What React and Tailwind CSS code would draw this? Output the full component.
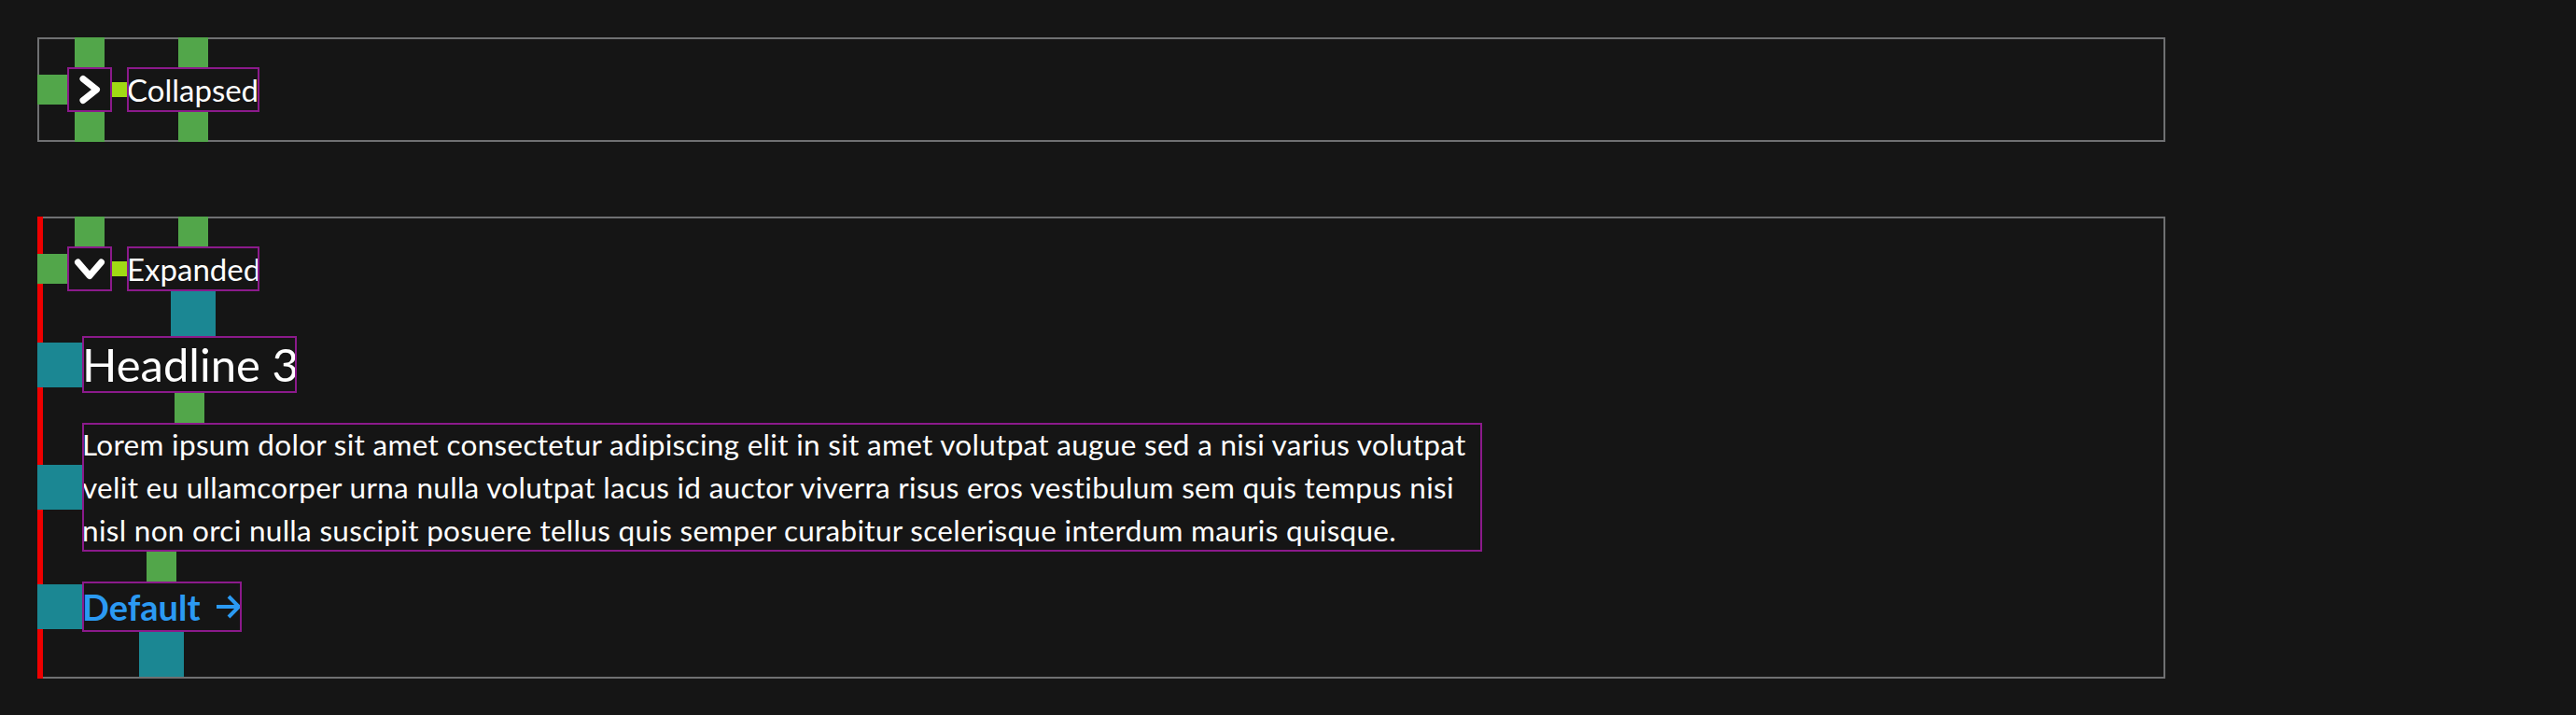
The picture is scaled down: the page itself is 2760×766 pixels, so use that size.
const font = { fontFamily: 'Lato, "Open Sans", sans-serif' };

function Chevron({ open }) {
  return (
    <svg width="48" height="48" viewBox="0 0 48 48" fill="none">
      <polyline
        points={open ? '11.5,17 24,31.5 36.5,17' : '17,12.5 31.5,24 17,35.5'}
        stroke="#ffffff"
        strokeWidth="7"
        strokeLinecap="round"
        strokeLinejoin="round"
      />
    </svg>
  );
}

function ArrowRight() {
  return (
    <svg width="28" height="28" viewBox="0 0 28 28" fill="none" stroke="#2b9af3" strokeWidth="4">
      <line x1="1" y1="14" x2="25" y2="14" />
      <polyline points="14,3 25,14 14,25" />
    </svg>
  );
}

function Header({ open, label }) {
  return (
    <div className="grid w-fit grid-cols-[32px_48px_16px_auto] grid-rows-[32px_48px_auto]">
      <div className="col-start-2 row-start-1 h-8 w-8 justify-self-center bg-[#52a64a]" />
      <div className="col-start-4 row-start-1 h-8 w-8 justify-self-center bg-[#52a64a]" />

      <div className="col-start-1 row-start-2 h-8 w-8 self-center bg-[#52a64a]" />
      <button className="col-start-2 row-start-2 flex h-12 w-12 items-center justify-center outline-2 -outline-offset-2 outline-[#8b1a8b]">
        <Chevron open={open} />
      </button>
      <div className="col-start-3 row-start-2 h-4 w-4 self-center bg-[#a0da14]" />
      <div className="col-start-4 row-start-2 h-12 w-[142px] text-[33px] leading-[48px] text-white outline-2 -outline-offset-2 outline-[#8b1a8b]">
        {label}
      </div>

      {open ? (
        <div className="col-start-4 row-start-3 h-12 w-12 justify-self-center bg-[#1b8793]" />
      ) : (
        <>
          <div className="col-start-2 row-start-3 h-8 w-8 justify-self-center bg-[#52a64a]" />
          <div className="col-start-4 row-start-3 h-8 w-8 justify-self-center bg-[#52a64a]" />
        </>
      )}
    </div>
  );
}

function Item({ before, after, children }) {
  return (
    <div className="grid w-fit grid-cols-[48px_auto]">
      {before ? <div className={`col-start-2 row-start-1 justify-self-center ${before}`} /> : null}
      <div className="col-start-1 row-start-2 h-12 w-12 self-center bg-[#1b8793]" />
      <div className="col-start-2 row-start-2">{children}</div>
      {after ? <div className={`col-start-2 row-start-3 justify-self-center ${after}`} /> : null}
    </div>
  );
}

export default function App() {
  return (
    <div className="min-h-screen bg-[#151515] p-10" style={font}>
      <section className="w-[2280px] shadow-[inset_0_0_0_2px_#6f7072]">
        <Header label="Collapsed" />
      </section>

      <section className="mt-20 w-[2280px] pb-[2px] shadow-[inset_6px_0_0_#ee0000,inset_0_0_0_2px_#6f7072]">
        <Header open label="Expanded" />

        <Item after="h-8 w-8 bg-[#52a64a]">
          <h3 className="w-[230px] text-[49px] leading-[61px] font-normal whitespace-nowrap text-white outline-2 -outline-offset-2 outline-[#8b1a8b]">
            Headline 3
          </h3>
        </Item>

        <Item>
          <p className="w-[1500px] text-[31.5px] leading-[46px] tracking-[0.3px] text-white outline-2 -outline-offset-2 outline-[#8b1a8b]">
            Lorem ipsum dolor sit amet consectetur adipiscing elit in sit amet volutpat augue sed a nisi varius volutpat
            velit eu ullamcorper urna nulla volutpat lacus id auctor viverra risus eros vestibulum sem quis tempus nisi
            nisl non orci nulla suscipit posuere tellus quis semper curabitur scelerisque interdum mauris quisque.
          </p>
        </Item>

        <Item before="h-8 w-8 bg-[#52a64a]" after="h-12 w-12 bg-[#1b8793]">
          <a
            href="#"
            className="inline-flex h-[54px] items-center gap-4 text-[38px] leading-[54px] font-bold text-[#2b9af3] outline-2 -outline-offset-2 outline-[#8b1a8b]"
          >
            Default
            <ArrowRight />
          </a>
        </Item>
      </section>
    </div>
  );
}
